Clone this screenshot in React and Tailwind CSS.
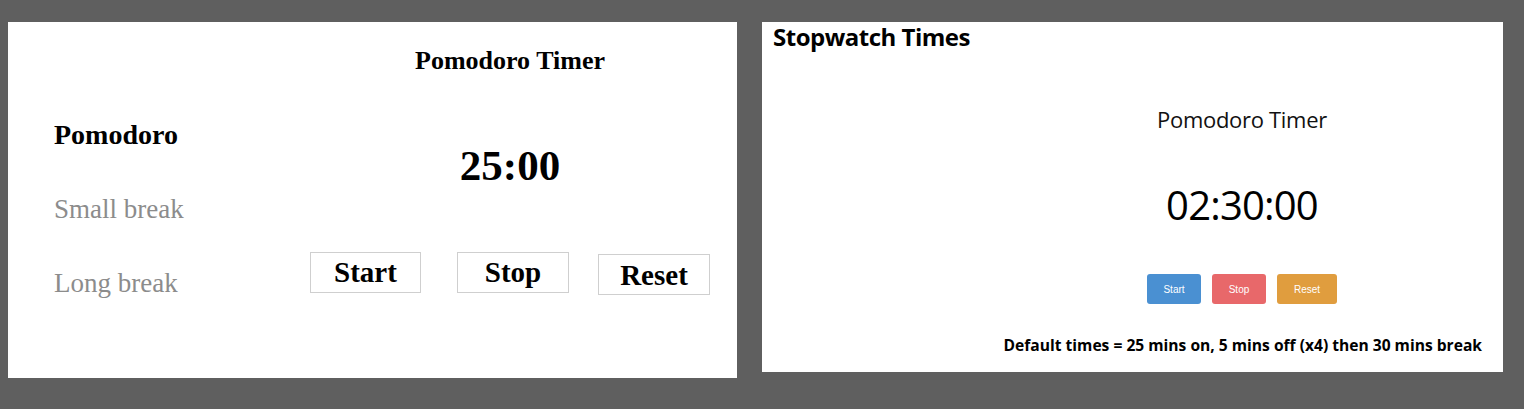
import React from 'react'

const serif = { fontFamily: '"Liberation Serif", "Times New Roman", serif' }
const sans = { fontFamily: '"Open Sans", "Noto Sans", sans-serif' }
const arial = { fontFamily: '"Liberation Sans", Arial, sans-serif' }

const PomodoroCard = () => {
  return (
    <div className="w-[729px] h-[356px] bg-white flex" style={serif}>
      {/* mode list */}
      <div className="w-[292px] pl-[46px] pt-[98px] flex flex-col">
        <div className="text-[28px] font-bold text-black leading-[30px] h-[74px]">Pomodoro</div>
        <div className="text-[27px] text-[#8c8c8c] leading-[30px] h-[74px]">Small break</div>
        <div className="text-[27px] text-[#8c8c8c] leading-[30px] h-[74px]">Long break</div>
      </div>

      {/* timer */}
      <div className="w-[420px] flex flex-col">
        <h1 className="mt-[24px] self-center text-[26px] font-bold leading-[30px] text-black">Pomodoro Timer</h1>
        <div className="mt-[65px] self-center text-[43px] font-bold leading-[50px] text-black">25:00</div>
        <div className="mt-[61px] pl-[10px] flex items-start">
          <button className="w-[111px] h-[41px] border border-[#cfcfcf] text-[29px] font-bold leading-none text-black">Start</button>
          <button className="ml-[36px] w-[112px] h-[41px] border border-[#cfcfcf] text-[29px] font-bold leading-none text-black">Stop</button>
          <button className="ml-[29px] mt-[2px] w-[112px] h-[41px] border border-[#cfcfcf] text-[29px] font-bold leading-none text-black pt-[2px]">Reset</button>
        </div>
      </div>
    </div>
  )
}

const StopwatchCard = () => {
  return (
    <div className="w-[741px] h-[350px] bg-white flex flex-col" style={sans}>
      <h2 className="pl-[11px] text-[24px] font-bold leading-[30px] text-black tracking-[-0.5px]">Stopwatch Times</h2>

      <div className="self-end w-[522px] flex flex-col items-center">
        <div className="mt-[52px] text-[22px] leading-[30px] text-[#111] tracking-[-0.3px]">Pomodoro Timer</div>
        <div className="mt-[45px] text-[40px] leading-[52px] text-black tracking-[-0.8px]">02:30:00</div>
        <div className="mt-[43px] flex gap-[11px]">
          <button className="w-[54px] h-[30px] rounded-[3px] bg-[#4a90d2] text-white text-[10px]" style={arial}>Start</button>
          <button className="w-[54px] h-[30px] rounded-[3px] bg-[#e8686a] text-white text-[10px]" style={arial}>Stop</button>
          <button className="w-[60px] h-[30px] rounded-[3px] bg-[#e09d3e] text-white text-[10px]" style={arial}>Reset</button>
        </div>
      </div>

      <p className="mt-[31px] pr-[21px] text-right text-[15.6px] font-bold leading-[20px] text-black">
        Default times = 25 mins on, 5 mins off (x4) then 30 mins break
      </p>
    </div>
  )
}

const App = () => {
  return (
    <div className="w-[1524px] h-[409px] bg-[#5f5f5f] flex items-start pl-[8px] pt-[22px] gap-[25px]">
      <PomodoroCard />
      <StopwatchCard />
    </div>
  )
}

export default App
